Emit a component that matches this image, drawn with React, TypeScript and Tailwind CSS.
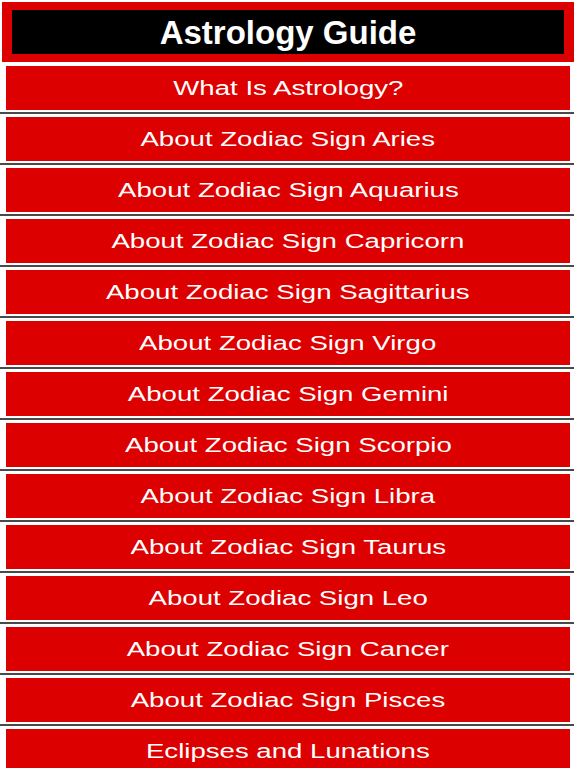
const ITEMS = [
  'What Is Astrology?',
  'About Zodiac Sign Aries',
  'About Zodiac Sign Aquarius',
  'About Zodiac Sign Capricorn',
  'About Zodiac Sign Sagittarius',
  'About Zodiac Sign Virgo',
  'About Zodiac Sign Gemini',
  'About Zodiac Sign Scorpio',
  'About Zodiac Sign Libra',
  'About Zodiac Sign Taurus',
  'About Zodiac Sign Leo',
  'About Zodiac Sign Cancer',
  'About Zodiac Sign Pisces',
  'Eclipses and Lunations',
]

export default function App() {
  return (
    <div className="h-[768px] w-[576px] overflow-hidden bg-white" style={{ fontFamily: '"Liberation Sans", Arial, sans-serif' }}>
      {/* Header */}
      <div className="mx-[2px] mt-[2px] bg-[#dd0000] px-[10px] py-[8px]">
        <div className="flex h-[44px] items-center justify-center bg-black">
          <h1 className="text-[33px] leading-none font-bold text-white">Astrology Guide</h1>
        </div>
      </div>

      {/* Menu list */}
      <div className="mt-[4px]">
        {ITEMS.map((item) => (
          <div key={item}>
            <button className="mx-[6px] flex h-[44px] w-[564px] items-center justify-center bg-[#dd0000] text-white">
              <span className="inline-block scale-x-[1.38] text-[20px] leading-none">{item}</span>
            </button>
            <div className="mt-[2px] mb-[3px] h-[2px] w-[574px] bg-[#4a4a4a]" />
          </div>
        ))}
      </div>
    </div>
  )
}
